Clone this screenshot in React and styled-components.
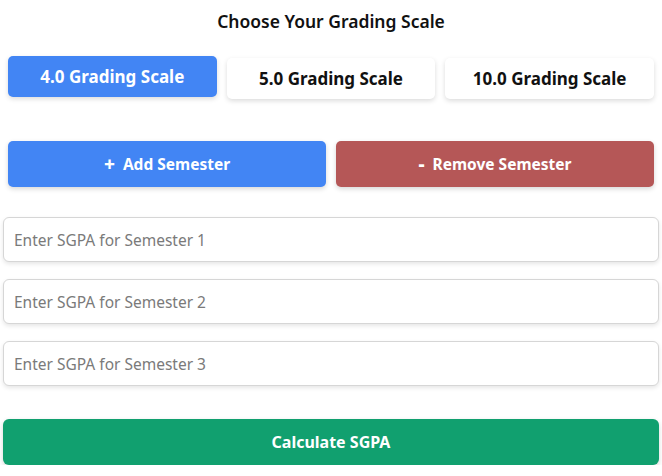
import React, { useState } from "react";
import styled, { createGlobalStyle } from "styled-components";

const Global = createGlobalStyle`
  * { box-sizing: border-box; }
  body { margin: 0; background: #fff; font-family: "Noto Sans", "Open Sans", sans-serif; }
`;

const Page = styled.div`
  padding: 0 3px;
  display: flex;
  flex-direction: column;
`;

const Title = styled.h2`
  margin: 0;
  height: 42px;
  padding-top: 10px;
  text-align: center;
  font-size: 17.5px;
  font-weight: 600;
  color: #111;
  line-height: 22px;
`;

const ScaleRow = styled.div`
  display: grid;
  grid-template-columns: repeat(3, 1fr);
  gap: 10px;
  margin: 16px 5px 0;
`;

const ScaleButton = styled.button`
  height: 41px;
  border: none;
  border-radius: 5px;
  font-family: inherit;
  font-size: 17px;
  font-weight: 700;
  cursor: pointer;
  background: ${(p) => (p.$active ? "#4285f4" : "#fff")};
  color: ${(p) => (p.$active ? "#fff" : "#111")};
  box-shadow: 0 2px 5px rgba(0, 0, 0, 0.14);
  transform: ${(p) => (p.$active ? "translateY(-2px)" : "none")};
`;

const ActionRow = styled.div`
  display: grid;
  grid-template-columns: 1fr 1fr;
  gap: 10px;
  margin: 42px 5px 0;
`;

const ActionButton = styled.button`
  height: 46px;
  border: none;
  border-radius: 5px;
  font-family: inherit;
  font-size: 15.5px;
  font-weight: 700;
  color: #fff;
  background: ${(p) => p.$bg};
  box-shadow: 0 2px 5px rgba(0, 0, 0, 0.16);
  display: flex;
  align-items: center;
  justify-content: center;
  gap: 8px;
  cursor: pointer;
`;

const Sign = styled.span`
  font-size: 19px;
  font-weight: 800;
  line-height: 1;
`;

const Inputs = styled.div`
  display: flex;
  flex-direction: column;
  gap: 17px;
  margin-top: 30px;
`;

const Field = styled.input`
  height: 45px;
  width: 100%;
  border: 1px solid #d6d6d6;
  border-radius: 6px;
  padding: 0 10px;
  font-family: inherit;
  font-size: 15.5px;
  color: #333;
  background: #fff;
  box-shadow: 0 2px 4px rgba(0, 0, 0, 0.1);
  outline: none;
  &::placeholder { color: #7a7a7a; }
`;

const CalcButton = styled.button`
  margin-top: 33px;
  height: 46px;
  width: 100%;
  border: none;
  border-radius: 6px;
  background: #11a06f;
  color: #fff;
  font-family: inherit;
  font-size: 16px;
  font-weight: 700;
  box-shadow: 0 2px 5px rgba(0, 0, 0, 0.16);
  cursor: pointer;
`;

export default function App() {
  const [scale, setScale] = useState(4);
  const [count, setCount] = useState(3);
  return (
    <Page>
      <Global />
      <Title>Choose Your Grading Scale</Title>
      <ScaleRow>
        {[4, 5, 10].map((s) => (
          <ScaleButton key={s} $active={scale === s} onClick={() => setScale(s)}>
            {s}.0 Grading Scale
          </ScaleButton>
        ))}
      </ScaleRow>
      <ActionRow>
        <ActionButton $bg="#4285f4" onClick={() => setCount(count + 1)}>
          <Sign>+</Sign> Add Semester
        </ActionButton>
        <ActionButton $bg="#b55757" onClick={() => setCount(Math.max(1, count - 1))}>
          <Sign>-</Sign> Remove Semester
        </ActionButton>
      </ActionRow>
      <Inputs>
        {Array.from({ length: count }, (_, i) => (
          <Field key={i} placeholder={`Enter SGPA for Semester ${i + 1}`} />
        ))}
      </Inputs>
      <CalcButton>Calculate SGPA</CalcButton>
    </Page>
  );
}
